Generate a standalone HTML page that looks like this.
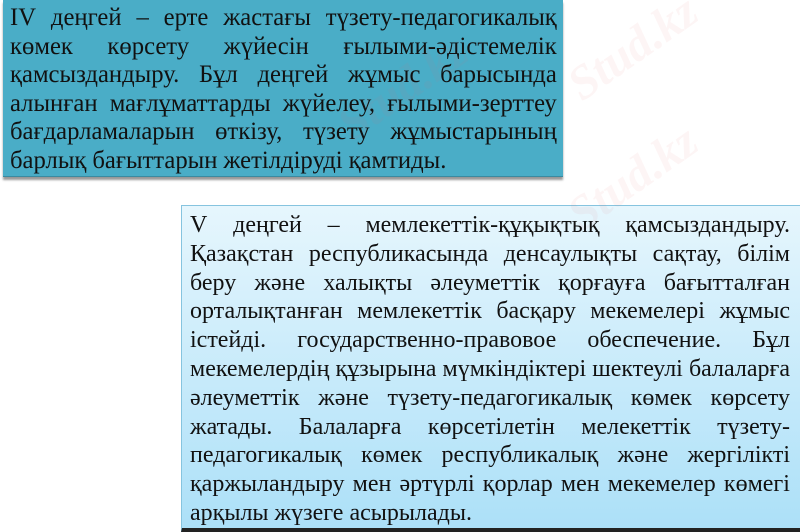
<!DOCTYPE html>
<html><head><meta charset="utf-8"><style>
html,body{margin:0;padding:0;background:#fff;width:800px;height:532px;overflow:hidden;position:relative}
.b1{position:absolute;left:3px;top:0;width:560px;height:176px;background:#4aadc7;border-bottom:1px solid #3b8aa0;box-shadow:0 3px 2px #999}
.b2{position:absolute;left:181px;top:205px;width:619px;height:322px;background:linear-gradient(#e6f6fd,#ace0f8);border:1px solid #86c4df;border-bottom:4px solid #222}
.t{position:absolute;font-family:"Liberation Serif","DejaVu Serif",serif;color:#111;transform-origin:0 0}
.l{display:flex;justify-content:space-between;white-space:nowrap}
.l.e{justify-content:flex-start;gap:6px}
.t1{left:10px;top:4px;width:554px;font-size:25px;line-height:28.6px;transform:scaleX(0.987)}
.t2{left:190px;top:211px;width:600px;font-size:24px;line-height:28.8px;transform:scaleX(1)}
.wm{position:absolute;font-family:"Liberation Serif",serif;font-weight:bold;font-style:italic;color:rgba(220,120,120,0.07);font-size:48px;transform:rotate(-35deg)}
</style></head><body>
<div class="b1"></div>
<div class="b2"></div>
<div class="wm" style="left:560px;top:20px">Stud.kz</div>
<div class="wm" style="left:560px;top:150px">Stud.kz</div>
<div class="wm" style="left:330px;top:60px">Stud.kz</div>
<div class="t t1">
<div class="l"><span>IV</span><span>деңгей</span><span>–</span><span>ерте</span><span>жастағы</span><span>түзету-педагогикалық</span></div>
<div class="l"><span>көмек</span><span>көрсету</span><span>жүйесін</span><span>ғылыми-әдістемелік</span></div>
<div class="l"><span>қамсыздандыру.</span><span>Бұл</span><span>деңгей</span><span>жұмыс</span><span>барысында</span></div>
<div class="l"><span>алынған</span><span>мағлұматтарды</span><span>жүйелеу,</span><span>ғылыми-зерттеу</span></div>
<div class="l"><span>бағдарламаларын</span><span>өткізу,</span><span>түзету</span><span>жұмыстарының</span></div>
<div class="l e"><span>барлық</span><span>бағыттарын</span><span>жетілдіруді</span><span>қамтиды.</span></div>
</div>
<div class="t t2">
<div class="l"><span>V</span><span>деңгей</span><span>–</span><span>мемлекеттік-құқықтық</span><span>қамсыздандыру.</span></div>
<div class="l"><span>Қазақстан</span><span>республикасында</span><span>денсаулықты</span><span>сақтау,</span><span>білім</span></div>
<div class="l"><span>беру</span><span>және</span><span>халықты</span><span>әлеуметтік</span><span>қорғауға</span><span>бағытталған</span></div>
<div class="l"><span>орталықтанған</span><span>мемлекеттік</span><span>басқару</span><span>мекемелері</span><span>жұмыс</span></div>
<div class="l"><span>істейді.</span><span>государственно-правовое</span><span>обеспечение.</span><span>Бұл</span></div>
<div class="l"><span>мекемелердің</span><span>құзырына</span><span>мүмкіндіктері</span><span>шектеулі</span><span>балаларға</span></div>
<div class="l"><span>әлеуметтік</span><span>және</span><span>түзету-педагогикалық</span><span>көмек</span><span>көрсету</span></div>
<div class="l"><span>жатады.</span><span>Балаларға</span><span>көрсетілетін</span><span>мелекеттік</span><span>түзету-</span></div>
<div class="l"><span>педагогикалық</span><span>көмек</span><span>республикалық</span><span>және</span><span>жергілікті</span></div>
<div class="l"><span>қаржыландыру</span><span>мен</span><span>әртүрлі</span><span>қорлар</span><span>мен</span><span>мекемелер</span><span>көмегі</span></div>
<div class="l e"><span>арқылы</span><span>жүзеге</span><span>асырылады.</span></div>
</div>
</body></html>
